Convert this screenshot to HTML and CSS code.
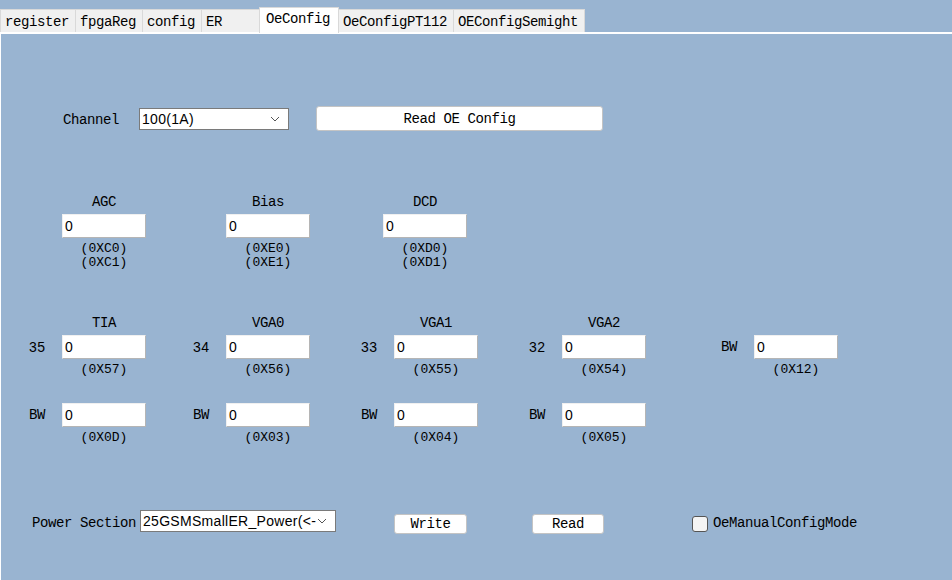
FILE: index.html
```html
<!DOCTYPE html>
<html lang="en">
<head>
  <meta charset="UTF-8" />
  <title>OeConfig</title>
  <link rel="stylesheet" href="styles.css">
</head>
<body>
  <div class="tabs">
    <div class="tab">register</div>
    <div class="tab">fpgaReg</div>
    <div class="tab">config</div>
    <div class="tab wide">ER</div>
    <div class="tab active">OeConfig</div>
    <div class="tab">OeConfigPT112</div>
    <div class="tab">OEConfigSemight</div>
  </div>

  <div class="panel">
    <div class="row-channel">
      <span class="lbl channel-lbl">Channel</span>
      <div class="combo channel-combo">
        <span class="combo-text">100(1A)</span>
        <svg class="chev" width="10" height="6" viewBox="0 0 10 6"><path d="M1 1 L5 5 L9 1" fill="none" stroke="#555" stroke-width="1"/></svg>
      </div>
      <button class="btn read-oe">Read OE Config</button>
    </div>

    <div class="grid row-a">
      <div class="cell">
        <div class="cap">AGC</div>
        <div class="box">0</div>
        <div class="hex">(0XC0)<br>(0XC1)</div>
      </div>
      <div class="cell">
        <div class="cap">Bias</div>
        <div class="box">0</div>
        <div class="hex">(0XE0)<br>(0XE1)</div>
      </div>
      <div class="cell">
        <div class="cap">DCD</div>
        <div class="box">0</div>
        <div class="hex">(0XD0)<br>(0XD1)</div>
      </div>
    </div>

    <div class="grid row-b">
      <div class="cell">
        <div class="cap">TIA</div>
        <span class="prefix num">35</span>
        <div class="box">0</div>
        <div class="hex">(0X57)</div>
      </div>
      <div class="cell">
        <div class="cap">VGA0</div>
        <span class="prefix num">34</span>
        <div class="box">0</div>
        <div class="hex">(0X56)</div>
      </div>
      <div class="cell">
        <div class="cap">VGA1</div>
        <span class="prefix num">33</span>
        <div class="box">0</div>
        <div class="hex">(0X55)</div>
      </div>
      <div class="cell">
        <div class="cap">VGA2</div>
        <span class="prefix num">32</span>
        <div class="box">0</div>
        <div class="hex">(0X54)</div>
      </div>
      <div class="cell">
        <div class="cap"></div>
        <span class="prefix">BW</span>
        <div class="box">0</div>
        <div class="hex">(0X12)</div>
      </div>
    </div>

    <div class="grid row-c">
      <div class="cell">
        <span class="prefix">BW</span>
        <div class="box">0</div>
        <div class="hex">(0X0D)</div>
      </div>
      <div class="cell">
        <span class="prefix">BW</span>
        <div class="box">0</div>
        <div class="hex">(0X03)</div>
      </div>
      <div class="cell">
        <span class="prefix">BW</span>
        <div class="box">0</div>
        <div class="hex">(0X04)</div>
      </div>
      <div class="cell">
        <span class="prefix">BW</span>
        <div class="box">0</div>
        <div class="hex">(0X05)</div>
      </div>
    </div>

    <div class="row-power">
      <span class="lbl power-lbl">Power Section</span>
      <div class="combo power-combo">
        <span class="combo-text">25GSMSmallER_Power(&lt;-</span>
        <svg class="chev" width="10" height="6" viewBox="0 0 10 6"><path d="M1 1 L5 5 L9 1" fill="none" stroke="#555" stroke-width="1"/></svg>
      </div>
      <button class="btn small write">Write</button>
      <button class="btn small read">Read</button>
      <span class="check"></span>
      <span class="lbl">OeManualConfigMode</span>
    </div>
  </div>
</body>
</html>
```

FILE: styles.css
```css
body {
  margin: 0;
  background: #99b4d1;
  font-family: 'Liberation Mono', monospace;
  font-size: 14px;
  letter-spacing: -0.4px;
  color: #000;
  height: 580px;
  overflow: hidden;
}

/* tab strip */
.tabs {
  display: flex;
  align-items: flex-end;
  height: 32px;
}

.tab {
  height: 22px;
  line-height: 24px;
  padding: 0 6px 0 4px;
  background: #f0f0f0;
  border: 1px solid #d9d9d9;
  border-bottom: none;
  margin-right: -1px;
}

.tab.wide {
  min-width: 49px;
}

.tab.active {
  height: 25px;
  line-height: 22px;
  padding: 0 8px 0 6px;
  margin: 0 -1px -1px -2px;
  background: #fff;
  border-color: #d9d9d9;
  position: relative;
  z-index: 1;
}

.panel {
  box-sizing: border-box;
  height: 548px;
  border-top: 2px solid #fff;
  border-left: 1px solid #fff;
  padding-top: 72px;
}

/* channel row */
.row-channel {
  display: flex;
  align-items: center;
  height: 25px;
  padding-left: 62px;
}

.channel-lbl {
  width: 76px;
  padding-top: 1px;
}

.combo {
  display: flex;
  align-items: center;
  justify-content: space-between;
  box-sizing: border-box;
  height: 22px;
  background: #fff;
  border: 1px solid #7a7a7a;
  padding: 0 8px 0 2px;
  font-family: 'Liberation Sans', sans-serif;
  font-size: 14px;
  letter-spacing: 0.3px;
}

.channel-combo {
  width: 150px;
  margin-right: 27px;
}

.btn {
  box-sizing: border-box;
  background: #fff;
  border: 1px solid #c4c4c4;
  border-radius: 3px;
  font-family: 'Liberation Mono', monospace;
  font-size: 14px;
  letter-spacing: -0.4px;
  padding: 0;
  color: #000;
}

.read-oe {
  width: 287px;
  height: 25px;
}

/* field grids */
.grid {
  display: grid;
  padding-left: 28px;
}

.row-a {
  grid-template-columns: 164px 157px 160px;
  margin-top: 63px;
}

.row-b {
  grid-template-columns: 164px 168px 168px 192px 160px;
  margin-top: 45px;
}

.row-c {
  grid-template-columns: 164px 168px 168px 192px;
  margin-top: 26px;
}

.cell {
  display: grid;
  grid-template-columns: 33px 84px;
}

.cap {
  grid-column: 2;
  height: 16px;
  line-height: 16px;
  margin-bottom: 4px;
  text-align: center;
}

.prefix {
  grid-column: 1;
  grid-row: 2;
  align-self: center;
}

.row-c .prefix {
  grid-row: 1;
}

.num {
  font-family: 'Liberation Sans', sans-serif;
  letter-spacing: 0.5px;
}

.box {
  grid-column: 2;
  box-sizing: border-box;
  height: 24px;
  line-height: 22px;
  background: #fff;
  border: 1px solid;
  border-color: #f0f0f0 #b5b5b5 #b5b5b5 #f0f0f0;
  padding-left: 2px;
  font-family: 'Liberation Sans', sans-serif;
}

.hex {
  grid-column: 2;
  margin-top: 4px;
  font-size: 13px;
  letter-spacing: 0;
  line-height: 14px;
  text-align: center;
}

/* bottom row */
.row-power {
  display: flex;
  align-items: center;
  height: 22px;
  margin-top: 65px;
  padding-left: 31px;
}

.lbl {
  padding-top: 3px;
}

.power-lbl {
  width: 108px;
}

.power-combo {
  width: 196px;
  margin-right: 58px;
}

.btn.small {
  height: 20px;
  line-height: 18px;
  margin-top: 5px;
}

.write {
  width: 73px;
  margin-right: 65px;
}

.read {
  width: 72px;
  margin-right: 88px;
}

.check {
  box-sizing: border-box;
  width: 16px;
  height: 16px;
  border: 1px solid #555;
  border-radius: 3px;
  background: #f4f4f4;
  margin-right: 5px;
  margin-top: 5px;
}
```
